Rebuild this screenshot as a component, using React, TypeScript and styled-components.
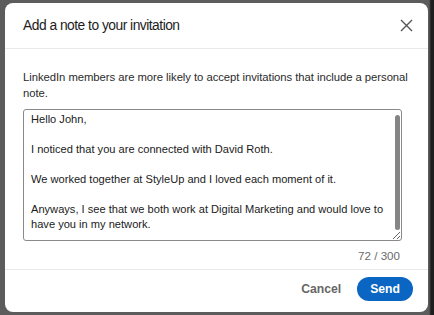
import styled, { createGlobalStyle } from "styled-components";

const GlobalStyle = createGlobalStyle`
  html, body {
    margin: 0;
    padding: 0;
    background: #5c5c5c;
  }
  body {
    font-family: "Liberation Sans", Arial, sans-serif;
  }
`;

const Backdrop = styled.div`
  width: 434px;
  height: 315px;
  display: flex;
  background: linear-gradient(to right, #5c5c5c 0, #5c5c5c 429px, #1e1e1e 431px);
  padding: 3px 6px 3px 5px;
  box-sizing: border-box;
`;

const Dialog = styled.div`
  flex: 1;
  display: flex;
  flex-direction: column;
  background: white;
  border-radius: 8px;
  overflow: hidden;
`;

const Header = styled.div`
  height: 45px;
  display: flex;
  align-items: center;
  justify-content: space-between;
  padding: 0 10px 0 18px;
  border-bottom: 1px solid #e9e9e9;

  .title {
    color: #1d1d1d;
    font-size: 13.8px;
    letter-spacing: -0.5px;
  }
`;

const CloseButton = styled.button`
  border: none;
  background: transparent;
  padding: 0;
  width: 24px;
  height: 24px;
  display: flex;
  align-items: center;
  justify-content: center;
`;

const Body = styled.div`
  display: flex;
  flex-direction: column;
  padding: 20px 10px 0 18px;
`;

const Description = styled.p`
  margin: 0;
  color: #2b2b2b;
  font-size: 11.3px;
  letter-spacing: -0.05px;
  line-height: 16px;
`;

const InputWrap = styled.div`
  position: relative;
  margin-top: 8px;
  width: 379px;
  height: 132px;
`;

const NoteInput = styled.textarea`
  display: block;
  width: 100%;
  height: 100%;
  box-sizing: border-box;
  resize: vertical;
  border: 1px solid #8a8a8a;
  border-radius: 3px;
  padding: 2px 10px 0 7px;
  color: #1a1a1a;
  font-family: "Liberation Sans", Arial, sans-serif;
  font-size: 11.1px;
  line-height: 15px;
  overflow: hidden;
  outline: none;
`;

const ScrollThumb = styled.div`
  position: absolute;
  top: 6px;
  right: 2px;
  width: 5px;
  height: 115px;
  border-radius: 3px;
  background: #858585;
  pointer-events: none;
`;

const Counter = styled.div`
  width: 379px;
  text-align: right;
  box-sizing: border-box;
  padding-right: 2px;
  margin-top: 8px;
  color: #6b6b6b;
  font-size: 11.6px;
`;

const Footer = styled.div`
  margin-top: 7px;
  border-top: 1px solid #e9e9e9;
  flex: 1;
  display: flex;
  align-items: center;
  justify-content: flex-end;
  gap: 3px;
  padding: 0 15px 4px 0;
`;

const Button = styled.button<{ $primary?: boolean }>`
  border: none;
  font-family: "Liberation Sans", Arial, sans-serif;
  font-weight: 700;
  font-size: 12.2px;
  height: 24px;
  padding: 0 13px;
  border-radius: 12px;
  color: ${(p) => (p.$primary ? "white" : "#666")};
  background: ${(p) => (p.$primary ? "#0a66c2" : "transparent")};
`;

const note = `Hello John,

I noticed that you are connected with David Roth.

We worked together at StyleUp and I loved each moment of it.

Anyways, I see that we both work at Digital Marketing and would love to have you in my network.`;

const App = () => {
  return (
    <Backdrop>
      <GlobalStyle />
      <Dialog>
        <Header>
          <span className='title'>Add a note to your invitation</span>
          <CloseButton aria-label='Dismiss'>
            <svg width='13' height='13' viewBox='0 0 13 13'>
              <path d='M1 1 L12 12 M12 1 L1 12' stroke='#555' strokeWidth='1.4' />
            </svg>
          </CloseButton>
        </Header>
        <Body>
          <Description>
            LinkedIn members are more likely to accept invitations that include a personal note.
          </Description>
          <InputWrap>
            <NoteInput defaultValue={note} />
            <ScrollThumb />
          </InputWrap>
          <Counter>72 / 300</Counter>
        </Body>
        <Footer>
          <Button>Cancel</Button>
          <Button $primary>Send</Button>
        </Footer>
      </Dialog>
    </Backdrop>
  );
};

export default App;
